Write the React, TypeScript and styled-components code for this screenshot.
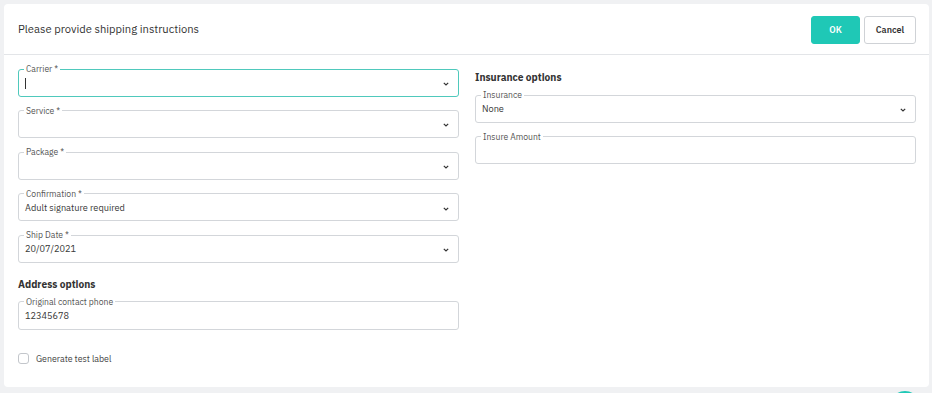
import styled, { createGlobalStyle } from "styled-components";

const GlobalStyle = createGlobalStyle`
    html, body {
        margin: 0;
        padding: 0;
        background: #f0f1f3;
        font-family: "IBM Plex Sans", Roboto, "Liberation Sans", sans-serif;
        color: #333;
    }
    * {
        box-sizing: border-box;
    }
`;

const Page = styled.div`
    width: 932px;
    height: 393px;
    padding: 4px 3px 0 4px;
    overflow: hidden;
    position: relative;
`;

const Card = styled.div`
    background: #fff;
    border-radius: 4px;
    height: 383px;
    display: flex;
    flex-direction: column;
`;

const Header = styled.header`
    height: 51px;
    padding: 0 13px 0 14px;
    display: flex;
    align-items: center;
    justify-content: space-between;
    border-bottom: 1px solid #e3e5e8;
`;

const Title = styled.h1`
    margin: 0;
    font-size: 11.2px;
    font-weight: 400;
    color: #333;
`;

const Actions = styled.div`
    display: flex;
    gap: 4px;
    margin-top: 1px;
`;

const Button = styled.button<{ $primary?: boolean }>`
    height: 28px;
    width: ${(p) => (p.$primary ? "49px" : "52px")};
    border-radius: 3px;
    font-family: inherit;
    font-size: 9px;
    font-weight: 600;
    cursor: pointer;
    border: 1px solid ${(p) => (p.$primary ? "#1fc8b6" : "#cfd2d6")};
    background: ${(p) => (p.$primary ? "#1fc8b6" : "#fff")};
    color: ${(p) => (p.$primary ? "#fff" : "#333")};
`;

const Body = styled.div`
    display: grid;
    grid-template-columns: 441px 441px;
    column-gap: 16px;
    padding: 9px 14px 0 14px;
`;

const Column = styled.div`
    display: flex;
    flex-direction: column;
`;

const Field = styled.fieldset<{ $focused?: boolean }>`
    margin: 0 0 9px 0;
    padding: 0 6px 0 6px;
    border: 1px solid ${(p) => (p.$focused ? "#4fc9bc" : "#d3d6da")};
    border-radius: 3px;
    min-width: 0;
`;

const Legend = styled.legend`
    font-size: 8.6px;
    line-height: 10px;
    height: 10px;
    color: #555;
    padding: 0 2px;
    margin-left: -1px;
`;

const ValueRow = styled.div`
    height: 21.6px;
    display: flex;
    align-items: center;
    justify-content: space-between;
    padding-bottom: 4px;
    font-size: 9.2px;
    color: #383838;
`;

const Caret = styled.span`
    display: inline-block;
    width: 1px;
    height: 11px;
    background: #333;
    vertical-align: middle;
`;

const Chevron = styled.svg`
    width: 6px;
    height: 4px;
    margin-right: 3px;
    margin-top: 2px;
`;

const SectionTitle = styled.h2<{ $top: number; $bottom: number }>`
    margin: ${(p) => p.$top}px 0 ${(p) => p.$bottom}px 0;
    font-size: 10.2px;
    font-weight: 700;
    color: #333;
    line-height: 13px;
`;

const CheckRow = styled.label`
    display: flex;
    align-items: center;
    gap: 7px;
    margin-top: 14px;
    font-size: 8.8px;
    color: #444;
`;

const Box = styled.span`
    width: 11px;
    height: 11px;
    border: 1px solid #c3c6cb;
    border-radius: 3px;
    background: #fff;
`;

const Fab = styled.div`
    position: absolute;
    right: 12px;
    top: 391px;
    width: 30px;
    height: 30px;
    border-radius: 50%;
    background: #1fc8b6;
`;

interface FieldProps {
    label: string;
    value?: string;
    select?: boolean;
    focused?: boolean;
}

function FormField({ label, value, select, focused }: FieldProps) {
    return (
        <Field $focused={focused}>
            <Legend>{label}</Legend>
            <ValueRow>
                <span>{focused ? <Caret /> : value}</span>
                {select && (
                    <Chevron viewBox="0 0 6 4">
                        <path d="M0.8 0.8 L3 3 L5.2 0.8" fill="none" stroke="#333" strokeWidth="1.2" />
                    </Chevron>
                )}
            </ValueRow>
        </Field>
    );
}

export default function App() {
    return (
        <Page>
            <GlobalStyle />
            <Card>
                <Header>
                    <Title>Please provide shipping instructions</Title>
                    <Actions>
                        <Button $primary>OK</Button>
                        <Button>Cancel</Button>
                    </Actions>
                </Header>
                <Body>
                    <Column>
                        <FormField label="Carrier *" select focused />
                        <FormField label="Service *" select />
                        <FormField label="Package *" select />
                        <FormField label="Confirmation *" value="Adult signature required" select />
                        <FormField label="Ship Date *" value="20/07/2021" select />
                        <SectionTitle $top={6} $bottom={6}>Address options</SectionTitle>
                        <FormField label="Original contact phone" value="12345678" />
                        <CheckRow>
                            <Box />
                            Generate test label
                        </CheckRow>
                    </Column>
                    <Column>
                        <SectionTitle $top={7} $bottom={6}>Insurance options</SectionTitle>
                        <FormField label="Insurance" value="None" select />
                        <FormField label="Insure Amount" />
                    </Column>
                </Body>
            </Card>
            <Fab />
        </Page>
    );
}
